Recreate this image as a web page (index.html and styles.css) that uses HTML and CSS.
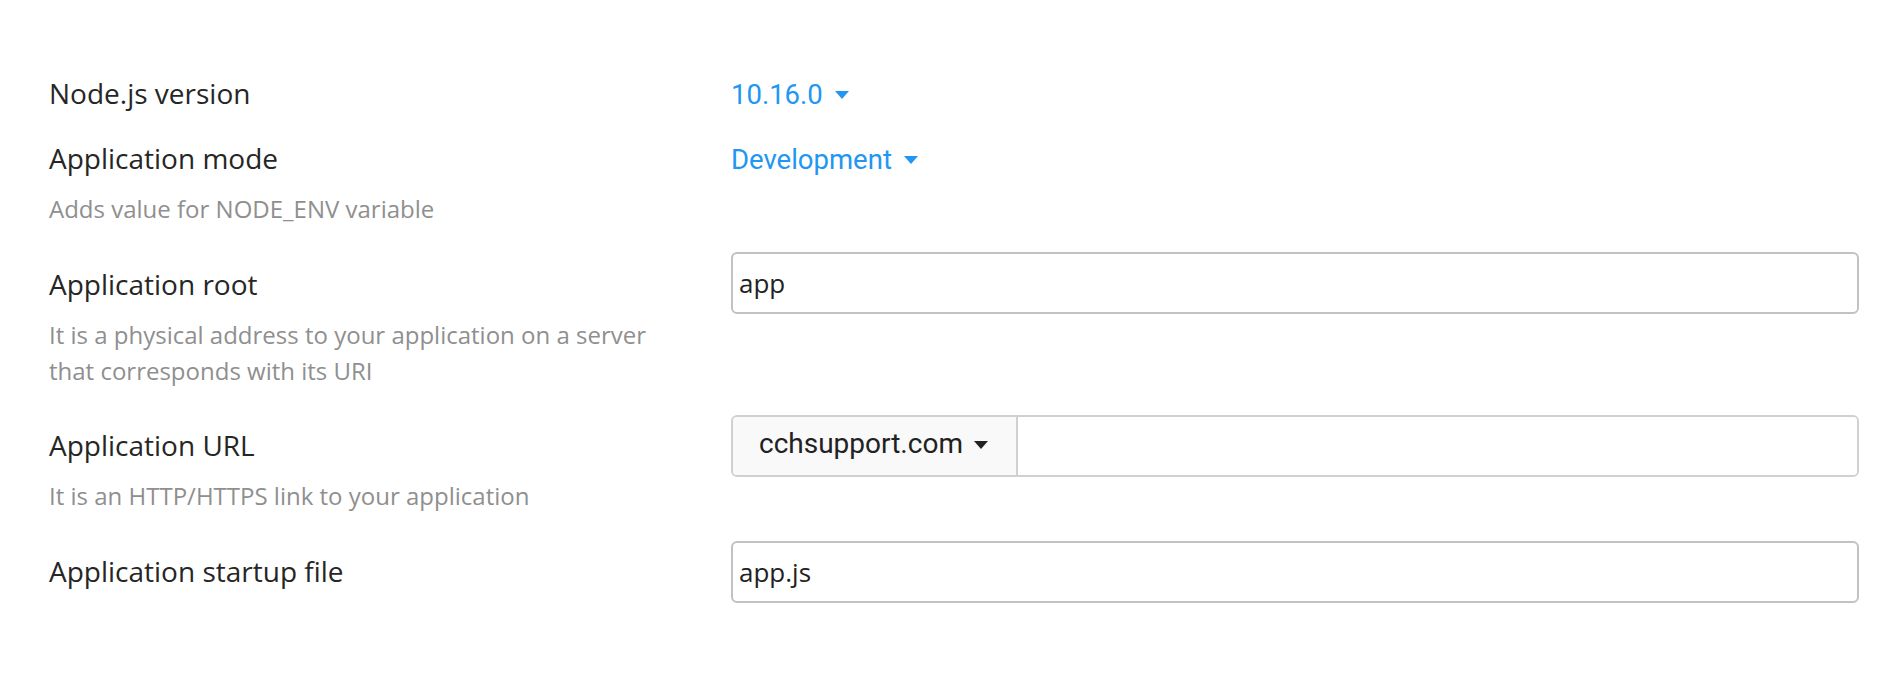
FILE: index.html
```html
<!DOCTYPE html>
<html lang="en">
<head>
    <meta charset="UTF-8">
    <meta name="viewport" content="width=device-width, initial-scale=1.0">
    <title>Create Application</title>
    <link rel="stylesheet" href="styles.css">
</head>
<body>
    <div class="app-form">
        <div class="form-row">
            <div class="form-label">
                <div class="label-text">Node.js version</div>
            </div>
            <div class="form-field">
                <span class="dropdown-link">10.16.0<span class="caret"></span></span>
            </div>
        </div>

        <div class="form-row mode-row">
            <div class="form-label">
                <div class="label-text">Application mode</div>
                <div class="help-text">Adds value for NODE_ENV variable</div>
            </div>
            <div class="form-field">
                <span class="dropdown-link">Development<span class="caret"></span></span>
            </div>
        </div>

        <div class="form-row with-input root-row">
            <div class="form-label">
                <div class="label-text">Application root</div>
                <div class="help-text">It is a physical address to your application on a server that corresponds with its URI</div>
            </div>
            <div class="form-field">
                <input class="text-input" type="text" value="app">
            </div>
        </div>

        <div class="form-row with-input url-row">
            <div class="form-label">
                <div class="label-text">Application URL</div>
                <div class="help-text">It is an HTTP/HTTPS link to your application</div>
            </div>
            <div class="form-field">
                <div class="input-group">
                    <div class="addon">cchsupport.com<span class="caret"></span></div>
                    <input class="group-input" type="text" value="">
                </div>
            </div>
        </div>

        <div class="form-row with-input file-row">
            <div class="form-label">
                <div class="label-text">Application startup file</div>
            </div>
            <div class="form-field">
                <input class="text-input" type="text" value="app.js">
            </div>
        </div>
    </div>
</body>
</html>
```

FILE: styles.css
```css
body {
    margin: 0;
    background-color: #fff;
    font-family: 'Open Sans', sans-serif;
}

.app-form {
    display: flex;
    flex-direction: column;
    padding: 73px 45px 0 49px;
}

.form-row {
    display: grid;
    grid-template-columns: 682px 1fr;
}

.mode-row {
    margin-top: 23px;
}

.root-row {
    margin-top: 25px;
}

.url-row {
    margin-top: 26px;
}

.file-row {
    margin-top: 27px;
}

.label-text {
    font-size: 28px;
    line-height: 40px;
    color: #262626;
}

.with-input .label-text {
    padding-top: 10px;
}

.root-row .label-text {
    padding-top: 12px;
}

.help-text {
    max-width: 620px;
    margin-top: 13px;
    font-size: 24px;
    line-height: 36px;
    color: #8f8f8f;
}

.dropdown-link {
    display: inline-block;
    padding-top: 2px;
    font-family: 'Roboto', sans-serif;
    font-size: 27.5px;
    line-height: 40px;
    color: #2196f3;
    cursor: pointer;
}

.caret {
    display: inline-block;
    width: 0;
    height: 0;
    margin-left: 12px;
    border-left: 7px solid transparent;
    border-right: 7px solid transparent;
    border-top: 8px solid currentColor;
    vertical-align: 5px;
}

.text-input {
    display: block;
    width: 100%;
    height: 62px;
    box-sizing: border-box;
    padding: 0 6px;
    border: 2px solid #c2c2c2;
    border-radius: 6px;
    font-family: 'Open Sans', sans-serif;
    font-size: 26px;
    color: #222;
    background-color: #fff;
    outline: none;
}

.input-group {
    display: flex;
    height: 62px;
    box-sizing: border-box;
    border: 2px solid #d0d0d0;
    border-radius: 6px;
    overflow: hidden;
}

.addon {
    display: flex;
    align-items: center;
    padding: 0 28px 6px 26px;
    background-color: #f9f9f9;
    border-right: 2px solid #d0d0d0;
    font-family: 'Roboto', sans-serif;
    font-size: 28px;
    color: #212121;
    cursor: pointer;
}

.addon .caret {
    margin-left: 11px;
    margin-top: 4px;
    border-top-color: #212121;
}

.group-input {
    flex: 1;
    min-width: 0;
    border: none;
    padding: 0 8px;
    font-family: 'Open Sans', sans-serif;
    font-size: 26px;
    outline: none;
}
```
